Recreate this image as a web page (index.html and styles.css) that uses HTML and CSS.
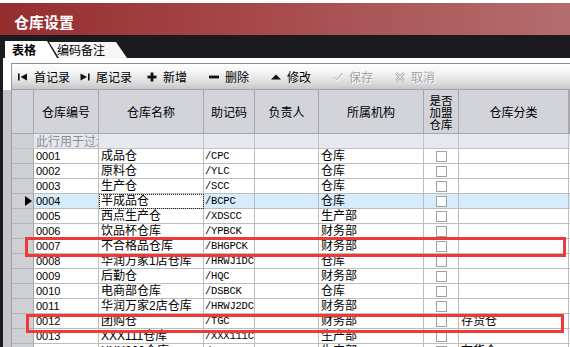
FILE: index.html
```html
<!DOCTYPE html>
<html lang="zh-CN">
<head>
<meta charset="utf-8">
<title>仓库设置</title>
<link rel="stylesheet" href="styles.css">
</head>
<body>
<div class="topline"></div>
<div class="title">仓库设置</div>
<div class="tabs">
  <div class="tab active">表格</div>
  <div class="tab">编码备注</div>
</div>
<div class="panel">
  <div class="toolbar">
    <div class="btn"><svg class="ico" viewBox="0 0 10 10"><rect x="0" y="1.5" width="1.6" height="7" fill="#111"/><polygon points="9,1.5 9,8.5 2.5,5" fill="#111"/></svg><span>首记录</span></div>
    <div class="btn wide"><svg class="ico" viewBox="0 0 10 10"><polygon points="0.5,1.5 0.5,8.5 7,5" fill="#111"/><rect x="8" y="1.5" width="1.6" height="7" fill="#111"/></svg><span>尾记录</span></div>
    <div class="btn"><svg class="ico" viewBox="0 0 10 10"><rect x="3.6" y="0.5" width="2.8" height="9" fill="#111"/><rect x="0.5" y="3.6" width="9" height="2.8" fill="#111"/></svg><span>新增</span></div>
    <div class="btn"><svg class="ico" viewBox="0 0 10 10"><rect x="0" y="3.6" width="10" height="2.8" fill="#111"/></svg><span>删除</span></div>
    <div class="btn"><svg class="ico" viewBox="0 0 10 10"><polygon points="0,7.5 10,7.5 5,2.5" fill="#111"/></svg><span>修改</span></div>
    <div class="btn off"><svg class="ico" viewBox="0 0 10 10"><path d="M0.8 5.2 L3.6 8.2 L9.4 1.2" fill="none" stroke="#b4b4b4" stroke-width="1.1"/><path d="M1.6 6.2 L3.8 9 L9.6 2.4" fill="none" stroke="#fff" stroke-width="0.8"/></svg><span>保存</span></div>
    <div class="btn off"><svg class="ico" viewBox="0 0 10 10"><path d="M1 1 L9 9 M9 1 L1 9" fill="none" stroke="#b0b0b0" stroke-width="2.6"/><path d="M1 1 L9 9 M9 1 L1 9" fill="none" stroke="#f4f4f4" stroke-width="1"/></svg><span>取消</span></div>
  </div>
  <div class="gridarea">
    <div class="gutter"></div>
    <div class="grid">
      <div class="row head">
        <div class="c ind"></div>
        <div class="c">仓库编号</div>
        <div class="c">仓库名称</div>
        <div class="c">助记码</div>
        <div class="c">负责人</div>
        <div class="c">所属机构</div>
        <div class="c stack">是否<br>加盟<br>仓库</div>
        <div class="c">仓库分类</div>
        <div class="c"></div>
      </div>
      <div class="row filter">
        <div class="c ind"></div>
        <div class="c hint">此行用于过滤</div>
        <div class="c"></div><div class="c"></div><div class="c"></div><div class="c"></div><div class="c"></div><div class="c"></div><div class="c"></div>
      </div>
      <div class="row"><div class="c ind"></div><div class="c num">0001</div><div class="c name">成品仓</div><div class="c code">/CPC</div><div class="c"></div><div class="c name">仓库</div><div class="c chk"><i></i></div><div class="c name"></div><div class="c"></div></div>
      <div class="row"><div class="c ind"></div><div class="c num">0002</div><div class="c name">原料仓</div><div class="c code">/YLC</div><div class="c"></div><div class="c name">仓库</div><div class="c chk"><i></i></div><div class="c name"></div><div class="c"></div></div>
      <div class="row"><div class="c ind"></div><div class="c num">0003</div><div class="c name">生产仓</div><div class="c code">/SCC</div><div class="c"></div><div class="c name">仓库</div><div class="c chk"><i></i></div><div class="c name"></div><div class="c"></div></div>
      <div class="row sel"><div class="c ind"><b class="arrow"></b></div><div class="c num">0004</div><div class="c name focus">半成品仓</div><div class="c code">/BCPC</div><div class="c"></div><div class="c name">仓库</div><div class="c chk"><i></i></div><div class="c name"></div><div class="c"></div></div>
      <div class="row"><div class="c ind"></div><div class="c num">0005</div><div class="c name">西点生产仓</div><div class="c code">/XDSCC</div><div class="c"></div><div class="c name">生产部</div><div class="c chk"><i></i></div><div class="c name"></div><div class="c"></div></div>
      <div class="row"><div class="c ind"></div><div class="c num">0006</div><div class="c name">饮品杯仓库</div><div class="c code">/YPBCK</div><div class="c"></div><div class="c name">财务部</div><div class="c chk"><i></i></div><div class="c name"></div><div class="c"></div></div>
      <div class="row"><div class="c ind"></div><div class="c num">0007</div><div class="c name">不合格品仓库</div><div class="c code">/BHGPCK</div><div class="c"></div><div class="c name">财务部</div><div class="c chk"><i></i></div><div class="c name"></div><div class="c"></div></div>
      <div class="row"><div class="c ind"></div><div class="c num">0008</div><div class="c name">华润万家1店仓库</div><div class="c code">/HRWJ1DC</div><div class="c"></div><div class="c name">仓库</div><div class="c chk"><i></i></div><div class="c name"></div><div class="c"></div></div>
      <div class="row"><div class="c ind"></div><div class="c num">0009</div><div class="c name">后勤仓</div><div class="c code">/HQC</div><div class="c"></div><div class="c name">财务部</div><div class="c chk"><i></i></div><div class="c name"></div><div class="c"></div></div>
      <div class="row"><div class="c ind"></div><div class="c num">0010</div><div class="c name">电商部仓库</div><div class="c code">/DSBCK</div><div class="c"></div><div class="c name">仓库</div><div class="c chk"><i></i></div><div class="c name"></div><div class="c"></div></div>
      <div class="row"><div class="c ind"></div><div class="c num">0011</div><div class="c name">华润万家2店仓库</div><div class="c code">/HRWJ2DC</div><div class="c"></div><div class="c name">财务部</div><div class="c chk"><i></i></div><div class="c name"></div><div class="c"></div></div>
      <div class="row"><div class="c ind"></div><div class="c num">0012</div><div class="c name">团购仓</div><div class="c code">/TGC</div><div class="c"></div><div class="c name">财务部</div><div class="c chk"><i></i></div><div class="c name">存货仓</div><div class="c"></div></div>
      <div class="row"><div class="c ind"></div><div class="c num">0013</div><div class="c name">XXX111仓库</div><div class="c code">/XXX111C</div><div class="c"></div><div class="c name">生产部</div><div class="c chk"><i></i></div><div class="c name"></div><div class="c"></div></div>
      <div class="row"><div class="c ind"></div><div class="c num">0014</div><div class="c name">XXX222仓库</div><div class="c code">/XXX222C</div><div class="c"></div><div class="c name">生产部</div><div class="c chk"><i></i></div><div class="c name">存货仓</div><div class="c"></div></div>
    </div>
  </div>
</div>
<div class="mark mark1"></div>
<div class="mark mark2"></div>
</body>
</html>
```
FILE: styles.css
```css
html, body {
  margin: 0;
  padding: 0;
}
body {
  position: relative;
  width: 570px;
  height: 347px;
  overflow: hidden;
  background: #1b1a1f;
  font-family: "Liberation Sans", "Noto Sans CJK SC", sans-serif;
  font-size: 12px;
  color: #000;
}
.topline {
  height: 3px;
  background: #fff;
}
.title {
  height: 32px;
  box-sizing: border-box;
  padding: 4px 0 0 14px;
  display: flex;
  align-items: center;
  background: linear-gradient(to right, #952d2f 0%, #a6494b 45%, #b46d6d 100%);
  color: #fff;
  font-family: "Noto Sans CJK SC", sans-serif;
  font-weight: bold;
  font-size: 15px;
}
.tabs {
  height: 23px;
  display: flex;
  align-items: flex-end;
  padding-left: 5px;
}
.tab {
  height: 16px;
  width: 78px;
  margin-left: -8px;
  padding-left: 8px;
  box-sizing: border-box;
  background: #f6f6f6;
  font-family: "Noto Sans CJK SC", sans-serif;
  font-size: 12px;
  line-height: 16px;
  clip-path: polygon(0 0, 67px 0, 100% 100%, 10px 100%);
}
.tab.active {
  position: relative;
  z-index: 2;
  margin-left: 0;
  width: 52px;
  height: 17px;
  padding-left: 7px;
  background: #fff;
  font-weight: bold;
  line-height: 18px;
  clip-path: polygon(0 0, 42px 0, 100% 100%, 0 100%);
}
.panel {
  margin-left: 3px;
  background: #fff;
  padding-top: 5px;
  height: 284px;
}
.toolbar {
  margin-left: 8px;
  height: 27px;
  box-sizing: border-box;
  border-top: 1px solid #8c8c8c;
  border-left: 1px solid #9a9a9a;
  border-bottom: 1px solid #a4a4a4;
  background: linear-gradient(#ffffff 0%, #f3f3f3 35%, #dcdcdc 75%, #c6c6c6 100%);
  display: flex;
  align-items: center;
  padding-left: 6px;
}
.btn {
  width: 62px;
  display: flex;
  align-items: center;
  gap: 6px;
  font-family: "Noto Sans CJK SC", sans-serif;
  font-size: 12px;
  line-height: 14px;
  padding-top: 1px;
}
.btn.wide {
  width: 67px;
}
.btn.off {
  color: #a2a2a2;
  text-shadow: 1px 1px 0 #fff;
}
.ico {
  width: 10px;
  height: 10px;
  flex: none;
}
.gridarea {
  display: flex;
  height: 257px;
}
.gutter {
  width: 8px;
  flex: none;
  background: #c5c6ca;
  border-right: 1px solid #a2a2a6;
}
.grid {
  flex: 1;
  overflow: hidden;
}
.row {
  display: grid;
  grid-template-columns: 22px 65px 105px 51px 64px 105px 35px 110px 1fr;
  height: 15px;
}
.c {
  box-sizing: border-box;
  border-right: 1px solid #bdbdbd;
  border-bottom: 1px solid #bdbdbd;
  overflow: hidden;
  white-space: nowrap;
  padding-left: 2px;
  line-height: 14px;
  background: #fff;
}
.c.ind {
  background: #cfd0d4;
  border-right-color: #a6a6a6;
  border-bottom-color: #b4b5b9;
  position: relative;
}
.head {
  height: 44px;
}
.head .c {
  background: #d3d4d9;
  border-color: #a8a8ac;
  display: flex;
  align-items: center;
  justify-content: center;
  padding: 0;
  font-family: "Noto Sans CJK SC", sans-serif;
  font-size: 12px;
}
.head .c.stack {
  font-size: 11.5px;
  line-height: 12px;
  text-align: center;
  white-space: normal;
}
.filter .c {
  background: #e6e8ef;
  border-color: #c4c4c8;
}
.filter .c.ind {
  background: #cfd0d4;
}
.filter .c.hint {
  color: #8e8e8e;
  font-family: "Noto Sans CJK SC", sans-serif;
  font-size: 12px;
}
.num {
  font-family: "Liberation Sans", sans-serif;
  font-size: 11px;
}
.name {
  font-family: "Liberation Sans", "Noto Sans CJK SC", sans-serif;
  font-size: 12px;
}
.code {
  font-family: "Liberation Mono", monospace;
  font-size: 10.5px;
  letter-spacing: -0.2px;
  padding-left: 1px;
}
.chk {
  display: flex;
  align-items: center;
  justify-content: center;
  padding: 0;
}
.chk i {
  display: block;
  width: 11px;
  height: 11px;
  box-sizing: border-box;
  border: 1px solid #a0a0a0;
  background: #fff;
}
.sel .c {
  background: #d6ecfb;
}
.sel .c.ind {
  background: #cfd0d4;
}
.sel .c.focus {
  background: #fff;
  outline: 1px dotted #222;
  outline-offset: -1px;
}
.arrow {
  position: absolute;
  left: 13px;
  top: 2px;
  width: 0;
  height: 0;
  border-top: 5px solid transparent;
  border-bottom: 5px solid transparent;
  border-left: 7px solid #000;
}
.mark {
  position: absolute;
  box-sizing: border-box;
  border: 3px solid #ef3838;
}
.mark1 {
  left: 25px;
  top: 237px;
  width: 541px;
  height: 20px;
}
.mark2 {
  left: 26px;
  top: 314px;
  width: 538px;
  height: 19px;
}
```
